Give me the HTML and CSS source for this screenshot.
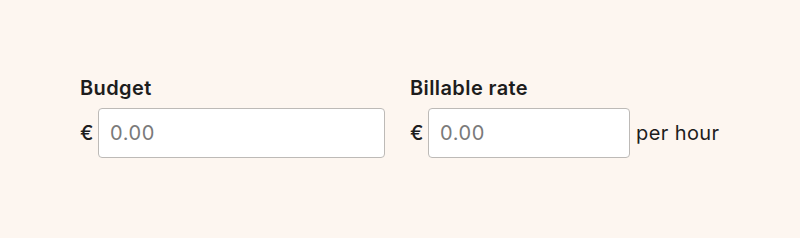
FILE: index.html
```html
<!DOCTYPE html>
<html lang="en">
<head>
    <meta charset="UTF-8">
    <meta name="viewport" content="width=device-width, initial-scale=1.0">
    <title>Project budget</title>
    <link rel="stylesheet" href="styles.css">
</head>
<body>
    <div class="fields">
        <div class="field field-budget">
            <label for="budget">Budget</label>
            <div class="amount-row">
                <span class="currency">€</span>
                <input type="text" id="budget" placeholder="0.00">
            </div>
        </div>

        <div class="field field-rate">
            <label for="rate">Billable rate</label>
            <div class="amount-row">
                <span class="currency">€</span>
                <input type="text" id="rate" placeholder="0.00">
                <span class="suffix">per hour</span>
            </div>
        </div>
    </div>
</body>
</html>
```

FILE: styles.css
```css
:root {
    --bg-color: #fdf6f0;
    --text-color: #1d1d1d;
    --border-color: #bdbab7;
    --placeholder-color: #7a7a7a;
}

body {
    margin: 0;
    font-family: 'Inter', 'Liberation Sans', sans-serif;
    background-color: var(--bg-color);
    color: var(--text-color);
}

.fields {
    display: flex;
    gap: 25px;
    padding: 76px 0 0 80px;
}

.field-budget {
    width: 305px;
}

label {
    display: block;
    font-size: 20px;
    line-height: 24px;
    font-weight: 600;
    letter-spacing: 0.4px;
    margin-bottom: 8px;
}

.amount-row {
    display: flex;
    align-items: center;
}

.currency {
    font-size: 20px;
    font-weight: 500;
    width: 13px;
    margin-right: 5px;
}

input {
    height: 50px;
    padding: 0 11px;
    border: 1px solid var(--border-color);
    border-radius: 4px;
    background-color: white;
    font-family: inherit;
    font-size: 20px;
    letter-spacing: 0.6px;
    color: var(--text-color);
    box-sizing: border-box;
    outline: none;
}

input::placeholder {
    color: var(--placeholder-color);
}

#budget {
    width: 287px;
}

#rate {
    width: 202px;
}

.suffix {
    font-size: 20px;
    letter-spacing: 0.4px;
    margin-left: 6px;
}
```
